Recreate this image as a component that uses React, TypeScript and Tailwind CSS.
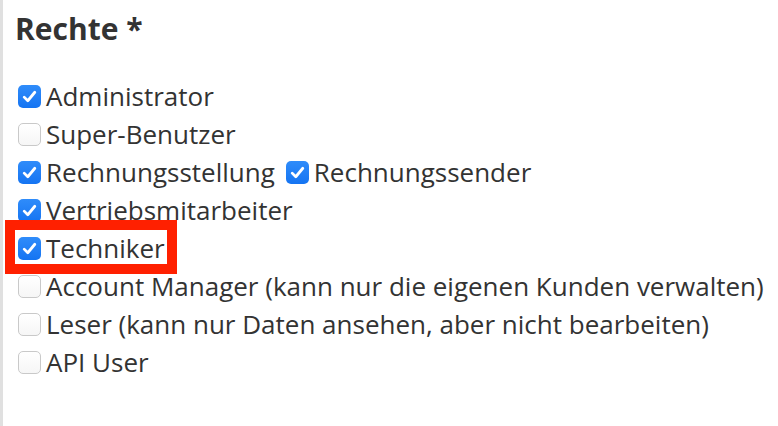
import React from 'react'

type Item = { label: string; checked: boolean }

const Box = ({ checked }: { checked: boolean }) =>
  checked ? (
    <span className="flex h-[23px] w-[23px] shrink-0 items-center justify-center rounded-[5px] bg-gradient-to-b from-[#2f8cfa] to-[#1474f2]">
      <svg viewBox="0 0 16 16" className="h-[17px] w-[17px]" fill="none">
        <path d="M3 8.6 L6.4 12 L13 4" stroke="white" strokeWidth="2.6" strokeLinecap="round" strokeLinejoin="round" />
      </svg>
    </span>
  ) : (
    <span className="h-[23px] w-[23px] shrink-0 rounded-[5px] border border-[#c9c9c9] bg-gradient-to-b from-white to-[#f6f6f6]" />
  )

const Row = ({ label, checked }: Item) => (
  <label className="flex items-center gap-[5px]">
    <Box checked={checked} />
    <span>{label}</span>
  </label>
)

const App = () => {
  return (
    <div className="h-[426px] w-[778px] bg-white font-['Open_Sans',sans-serif] text-[#333]">
      <div className="h-full border-l-[3px] border-[#e0e0e0] pl-[12px] pt-[9px]">
        <h2 className="text-[30px] font-bold leading-[40px]">Rechte *</h2>
        <div className="mt-[28px] flex flex-col text-[26px] leading-[38px] pl-[3px]">
          <div className="flex h-[38px] items-center"><Row label="Administrator" checked /></div>
          <div className="flex h-[38px] items-center"><Row label="Super-Benutzer" checked={false} /></div>
          <div className="flex h-[38px] items-center gap-[11px]">
            <Row label="Rechnungsstellung" checked />
            <Row label="Rechnungssender" checked />
          </div>
          <div className="flex h-[38px] items-center"><Row label="Vertriebsmitarbeiter" checked /></div>
          <div className="relative flex h-[38px] items-center">
            <Row label="Techniker" checked />
            <span className="absolute left-[-13px] top-[-9px] h-[54px] w-[172px] border-[10px] border-[#ff2000]" />
          </div>
          <div className="flex h-[38px] items-center"><Row label="Account Manager (kann nur die eigenen Kunden verwalten)" checked={false} /></div>
          <div className="flex h-[38px] items-center"><Row label="Leser (kann nur Daten ansehen, aber nicht bearbeiten)" checked={false} /></div>
          <div className="flex h-[38px] items-center"><Row label="API User" checked={false} /></div>
        </div>
      </div>
    </div>
  )
}

export default App
